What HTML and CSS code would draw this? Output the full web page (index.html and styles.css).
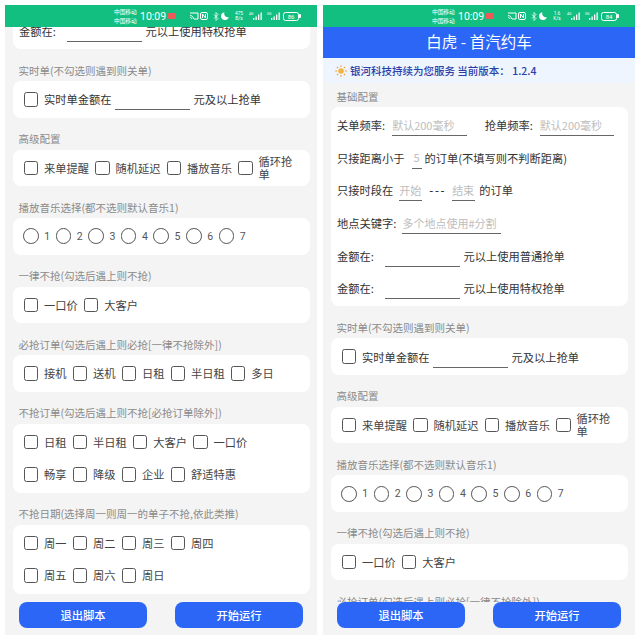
FILE: index.html
```html
<!DOCTYPE html>
<html>
<head>
  <meta charset="UTF-8">
  <title>白虎 - 首汽约车</title>
  <link rel="stylesheet" href="styles.css">
</head>
<body>
  <svg class="sprite" xmlns="http://www.w3.org/2000/svg">
    <symbol id="i-cast" viewBox="0 0 10 8">
      <path d="M1 1h8v6H5M1 3.5c2 0 3.500 1.500 3.500 3.500M1 5.300c1 0 1.700.7 1.700 1.700" fill="none" stroke="#fff" stroke-width="1"/>
    </symbol>
    <symbol id="i-nfc" viewBox="0 0 8 8">
      <rect x=".5" y=".5" width="7" height="7" rx="1.500" fill="none" stroke="#fff"/>
      <path d="M2.500 6V2l3 4V2" fill="none" stroke="#fff" stroke-width="1"/>
    </symbol>
    <symbol id="i-bt" viewBox="0 0 6 9">
      <path d="M1 2.500l4 4-2 2V.5l2 2-4 4" fill="none" stroke="#fff" stroke-width=".8"/>
    </symbol>
    <symbol id="i-moon" viewBox="0 0 8 8">
      <path d="M3.500.3A3.900 3.900 0 1 0 7.800 5 3.500 3.500 0 0 1 3.500.3z" fill="#fff"/>
    </symbol>
    <symbol id="i-signal" viewBox="0 0 9 8">
      <path d="M0 6h1.300v2H0zM2.500 4.500h1.300V8H2.500zM5 2.500h1.300V8H5zM7.500.5h1.300V8H7.500z" fill="#fff"/>
    </symbol>
    <symbol id="i-sun" viewBox="0 0 12 12">
      <circle cx="6" cy="6" r="2.800" fill="#f5b342"/>
      <path d="M6 .2v1.800M6 10v1.800M.2 6H2M10 6h1.800M1.900 1.900l1.200 1.200M8.900 8.900l1.200 1.200M1.900 10.100l1.200-1.200M8.900 3.100l1.200-1.200" stroke="#f0a030" stroke-width="1.100"/>
    </symbol>
  </svg>

  <div class="screens">

    <!-- left phone, scrolled down -->
    <div class="phone">
      <div class="status-bar">
        <div class="carrier">中国移动<br>中国移动</div>
        <span class="clock">10:09</span>
        <span class="dnd"></span>
        <svg class="ic-cast"><use href="#i-cast"/></svg>
        <svg class="ic-nfc"><use href="#i-nfc"/></svg>
        <svg class="ic-bt"><use href="#i-bt"/></svg>
        <svg class="ic-moon"><use href="#i-moon"/></svg>
        <div class="speed">475<br>B/s</div>
        <span class="net">4G</span><svg class="ic-signal"><use href="#i-signal"/></svg>
        <span class="net net-2">5G</span><svg class="ic-signal"><use href="#i-signal"/></svg>
        <span class="battery">86</span>
      </div>
      <div class="content">
        <div class="scrolled">
          <div class="card">
            <div class="row">
              <span class="amount-label">金额在:</span>
              <input type="text" class="field field-amount">
              <span>元以上使用特权抢单</span>
            </div>
          </div>

          <div class="section-title">实时单(不勾选则遇到则关单)</div>
          <div class="card">
            <div class="row options">
              <label class="opt"><input type="checkbox"></label>
              <span>实时单金额在</span>
              <input type="text" class="field field-amount field-tight">
              <span>元及以上抢单</span>
            </div>
          </div>

          <div class="section-title">高级配置</div>
          <div class="card">
            <div class="row options">
              <label class="opt"><input type="checkbox"> 来单提醒</label>
              <label class="opt"><input type="checkbox"> 随机延迟</label>
              <label class="opt"><input type="checkbox"> 播放音乐</label>
              <label class="opt"><input type="checkbox"> <span class="wrap">循环抢单</span></label>
            </div>
          </div>

          <div class="section-title">播放音乐选择(都不选则默认音乐1)</div>
          <div class="card">
            <div class="row options radios">
              <label class="opt"><input type="radio" name="music-a"> 1</label>
              <label class="opt"><input type="radio" name="music-a"> 2</label>
              <label class="opt"><input type="radio" name="music-a"> 3</label>
              <label class="opt"><input type="radio" name="music-a"> 4</label>
              <label class="opt"><input type="radio" name="music-a"> 5</label>
              <label class="opt"><input type="radio" name="music-a"> 6</label>
              <label class="opt"><input type="radio" name="music-a"> 7</label>
            </div>
          </div>

          <div class="section-title">一律不抢(勾选后遇上则不抢)</div>
          <div class="card">
            <div class="row options">
              <label class="opt"><input type="checkbox"> 一口价</label>
              <label class="opt"><input type="checkbox"> 大客户</label>
            </div>
          </div>

          <div class="section-title">必抢订单(勾选后遇上则必抢[一律不抢除外])</div>
          <div class="card">
            <div class="row options">
              <label class="opt"><input type="checkbox"> 接机</label>
              <label class="opt"><input type="checkbox"> 送机</label>
              <label class="opt"><input type="checkbox"> 日租</label>
              <label class="opt"><input type="checkbox"> 半日租</label>
              <label class="opt"><input type="checkbox"> 多日</label>
            </div>
          </div>

          <div class="section-title">不抢订单(勾选后遇上则不抢[必抢订单除外])</div>
          <div class="card">
            <div class="row options">
              <label class="opt"><input type="checkbox"> 日租</label>
              <label class="opt"><input type="checkbox"> 半日租</label>
              <label class="opt"><input type="checkbox"> 大客户</label>
              <label class="opt"><input type="checkbox"> 一口价</label>
            </div>
            <div class="row options">
              <label class="opt"><input type="checkbox"> 畅享</label>
              <label class="opt"><input type="checkbox"> 降级</label>
              <label class="opt"><input type="checkbox"> 企业</label>
              <label class="opt"><input type="checkbox"> 舒适特惠</label>
            </div>
          </div>

          <div class="section-title">不抢日期(选择周一则周一的单子不抢,依此类推)</div>
          <div class="card">
            <div class="row options">
              <label class="opt"><input type="checkbox"> 周一</label>
              <label class="opt"><input type="checkbox"> 周二</label>
              <label class="opt"><input type="checkbox"> 周三</label>
              <label class="opt"><input type="checkbox"> 周四</label>
            </div>
            <div class="row options">
              <label class="opt"><input type="checkbox"> 周五</label>
              <label class="opt"><input type="checkbox"> 周六</label>
              <label class="opt"><input type="checkbox"> 周日</label>
            </div>
          </div>
        </div>
      </div>
      <div class="footer">
        <button class="btn">退出脚本</button>
        <button class="btn">开始运行</button>
      </div>
    </div>

    <!-- right phone, top of the page -->
    <div class="phone">
      <div class="status-bar">
        <div class="carrier">中国移动<br>中国移动</div>
        <span class="clock">10:09</span>
        <span class="dnd"></span>
        <svg class="ic-cast"><use href="#i-cast"/></svg>
        <svg class="ic-nfc"><use href="#i-nfc"/></svg>
        <svg class="ic-bt"><use href="#i-bt"/></svg>
        <svg class="ic-moon"><use href="#i-moon"/></svg>
        <div class="speed">1.6<br>K/s</div>
        <span class="net">4G</span><svg class="ic-signal"><use href="#i-signal"/></svg>
        <span class="net net-2">5G</span><svg class="ic-signal"><use href="#i-signal"/></svg>
        <span class="battery">84</span>
      </div>
      <div class="app-header">白虎 - 首汽约车</div>
      <div class="notice">
        <svg class="ic-sun"><use href="#i-sun"/></svg>
        <span>银河科技持续为您服务 当前版本： 1.2.4</span>
      </div>
      <div class="content">
        <div class="section-title first">基础配置</div>
        <div class="card card-form">
          <div class="row">
            <span>关单频率:</span>
            <input type="text" class="field field-amount field-freq" placeholder="默认200毫秒">
            <span class="second-label">抢单频率:</span>
            <input type="text" class="field field-amount field-freq" placeholder="默认200毫秒">
          </div>
          <div class="row">
            <span>只接距离小于</span>
            <input type="text" class="field field-dist" placeholder="5">
            <span>的订单(不填写则不判断距离)</span>
          </div>
          <div class="row">
            <span>只接时段在</span>
            <input type="text" class="field field-time" placeholder="开始">
            <span class="dashes">---</span>
            <input type="text" class="field field-time" placeholder="结束">
            <span>的订单</span>
          </div>
          <div class="row">
            <span>地点关键字:</span>
            <input type="text" class="field field-place" placeholder="多个地点使用#分割">
          </div>
          <div class="row">
            <span class="amount-label">金额在:</span>
            <input type="text" class="field field-amount">
            <span>元以上使用普通抢单</span>
          </div>
          <div class="row">
            <span class="amount-label">金额在:</span>
            <input type="text" class="field field-amount">
            <span>元以上使用特权抢单</span>
          </div>
        </div>

        <div class="section-title">实时单(不勾选则遇到则关单)</div>
        <div class="card">
          <div class="row options">
            <label class="opt"><input type="checkbox"></label>
            <span>实时单金额在</span>
            <input type="text" class="field field-amount field-tight">
            <span>元及以上抢单</span>
          </div>
        </div>

        <div class="section-title">高级配置</div>
        <div class="card">
          <div class="row options">
            <label class="opt"><input type="checkbox"> 来单提醒</label>
            <label class="opt"><input type="checkbox"> 随机延迟</label>
            <label class="opt"><input type="checkbox"> 播放音乐</label>
            <label class="opt"><input type="checkbox"> <span class="wrap">循环抢单</span></label>
          </div>
        </div>

        <div class="section-title">播放音乐选择(都不选则默认音乐1)</div>
        <div class="card">
          <div class="row options radios">
            <label class="opt"><input type="radio" name="music-b"> 1</label>
            <label class="opt"><input type="radio" name="music-b"> 2</label>
            <label class="opt"><input type="radio" name="music-b"> 3</label>
            <label class="opt"><input type="radio" name="music-b"> 4</label>
            <label class="opt"><input type="radio" name="music-b"> 5</label>
            <label class="opt"><input type="radio" name="music-b"> 6</label>
            <label class="opt"><input type="radio" name="music-b"> 7</label>
          </div>
        </div>

        <div class="section-title">一律不抢(勾选后遇上则不抢)</div>
        <div class="card">
          <div class="row options">
            <label class="opt"><input type="checkbox"> 一口价</label>
            <label class="opt"><input type="checkbox"> 大客户</label>
          </div>
        </div>

        <div class="section-title">必抢订单(勾选后遇上则必抢[一律不抢除外])</div>
      </div>
      <div class="footer">
        <button class="btn">退出脚本</button>
        <button class="btn">开始运行</button>
      </div>
    </div>

  </div>
</body>
</html>
```

FILE: styles.css
```css
body {
  margin: 0;
  background: #fff;
  font-family: "Noto Sans CJK SC", "Noto Sans", sans-serif;
  font-size: 11.25px;
  color: #333;
}
.sprite {
  display: none;
}
.screens {
  display: flex;
  gap: 6px;
  padding: 5px;
  height: 630px;
}
.phone {
  width: 312px;
  height: 630px;
  display: flex;
  flex-direction: column;
  background: #f4f4f4;
}

/* status bar */
.status-bar {
  flex: none;
  height: 22px;
  display: flex;
  align-items: center;
  padding-left: 109px;
  background: #12bf80;
  color: #fff;
}
.carrier {
  width: 24px;
  font-size: 5.7px;
  line-height: 9px;
  white-space: nowrap;
}
.clock {
  width: 26px;
  margin-left: 2px;
  font-family: Roboto, sans-serif;
  font-size: 10.5px;
}
.dnd {
  width: 8px;
  height: 6px;
  margin-left: 2px;
  border-radius: 1px;
  background: #ee5a5a;
}
.status-bar svg {
  flex: none;
}
.ic-cast {
  width: 10px;
  height: 8px;
  margin-left: 13px;
}
.ic-nfc {
  width: 8px;
  height: 8px;
  margin-left: 1px;
}
.ic-bt {
  width: 6px;
  height: 9px;
  margin-left: 5px;
}
.ic-moon {
  width: 8px;
  height: 8px;
  margin-left: 2px;
}
.speed {
  width: 10px;
  margin-left: 5px;
  font-family: Roboto, sans-serif;
  font-size: 4.8px;
  line-height: 5px;
  text-align: center;
}
.net {
  width: 4px;
  margin: -4px 0 0 5px;
  font-family: Roboto, sans-serif;
  font-size: 3.5px;
  white-space: nowrap;
}
.net-2 {
  margin-left: 5px;
}
.ic-signal {
  width: 9px;
  height: 8px;
}
.battery {
  position: relative;
  width: 16px;
  height: 9px;
  margin-left: 3px;
  border: 1px solid #fff;
  border-radius: 2.5px;
  box-sizing: border-box;
  font-family: Roboto, sans-serif;
  font-size: 6px;
  line-height: 7px;
  text-align: center;
}
.battery::after {
  content: "";
  position: absolute;
  top: 1.5px;
  right: -2.5px;
  width: 1.5px;
  height: 4px;
  border-radius: 0 1px 1px 0;
  background: #fff;
}

.app-header {
  flex: none;
  height: 31px;
  line-height: 29px;
  text-align: center;
  background: #2b66f6;
  color: #fff;
  font-size: 15.5px;
}
.notice {
  flex: none;
  height: 25px;
  display: flex;
  align-items: center;
  padding-left: 12px;
  background: #eef5ff;
  color: #2c3ea6;
  font-size: 10.5px;
  font-weight: 500;
}
.ic-sun {
  width: 12px;
  height: 12px;
  margin-right: 3px;
}

/* scroll area */
.content {
  flex: 1;
  min-height: 0;
  overflow: hidden;
  padding: 0 7.5px;
}
.scrolled {
  margin-top: -14.5px;
}
.section-title {
  height: 14px;
  padding: 14.5px 0 3.5px 6px;
  font-size: 10.5px;
  line-height: 14px;
  color: #8a8a8a;
  white-space: nowrap;
}
.section-title.first {
  padding-top: 6.5px;
}
.card {
  display: flex;
  flex-direction: column;
  gap: 0.6px;
  padding: 2.25px 6.5px;
  background: #fff;
  border-radius: 8px;
}
.row {
  height: 32px;
  display: flex;
  align-items: center;
  white-space: nowrap;
}
.options {
  gap: 6px;
  padding-left: 4.5px;
}
.radios {
  gap: 5.5px;
  padding-left: 4px;
  font-family: Roboto, sans-serif;
  font-size: 10.5px;
}
.opt {
  display: flex;
  align-items: center;
  gap: 6px;
  color: #444;
}
.radios .opt {
  gap: 5.5px;
  color: #555;
}
.wrap {
  width: 36px;
  white-space: normal;
  line-height: 13px;
}
input[type="checkbox"],
input[type="radio"] {
  appearance: none;
  flex: none;
  margin: 0;
  width: 14.5px;
  height: 14.5px;
  box-sizing: border-box;
  border: 1.5px solid #555;
  border-radius: 2.5px;
  background: #fff;
}
input[type="radio"] {
  width: 15.7px;
  height: 15.7px;
  border-radius: 50%;
}

/* underlined inputs */
.field {
  height: 22px;
  box-sizing: border-box;
  margin: 0 4px 0 7px;
  padding: 0;
  border: none;
  border-bottom: 1px solid #666;
  outline: none;
  background: none;
  font: inherit;
  font-size: 11px;
}
.field::placeholder {
  color: #bdbdbd;
}
.field-amount {
  width: 74.5px;
}
.field-tight {
  margin-left: -2.5px;
  margin-right: -2px;
}
.field-freq {
  margin-right: 0;
}
.field-dist {
  width: 10px;
  margin-right: 3px;
  text-align: center;
}
.field-time {
  width: 23px;
  margin-left: 6px;
}
.field-place {
  width: 99px;
  margin-left: 6px;
}
.amount-label {
  width: 41px;
}
.second-label {
  margin-left: 18px;
}
.dashes {
  margin-left: 3px;
  letter-spacing: 1.6px;
  font-weight: 500;
}

.footer {
  flex: none;
  display: flex;
  justify-content: space-between;
  padding: 0 14px 7px;
  background: #f4f4f4;
}
.btn {
  width: 128px;
  height: 26px;
  padding: 0;
  border: none;
  border-radius: 8px;
  background: #2b66f6;
  color: #fff;
  font: inherit;
  font-weight: 500;
}
```
